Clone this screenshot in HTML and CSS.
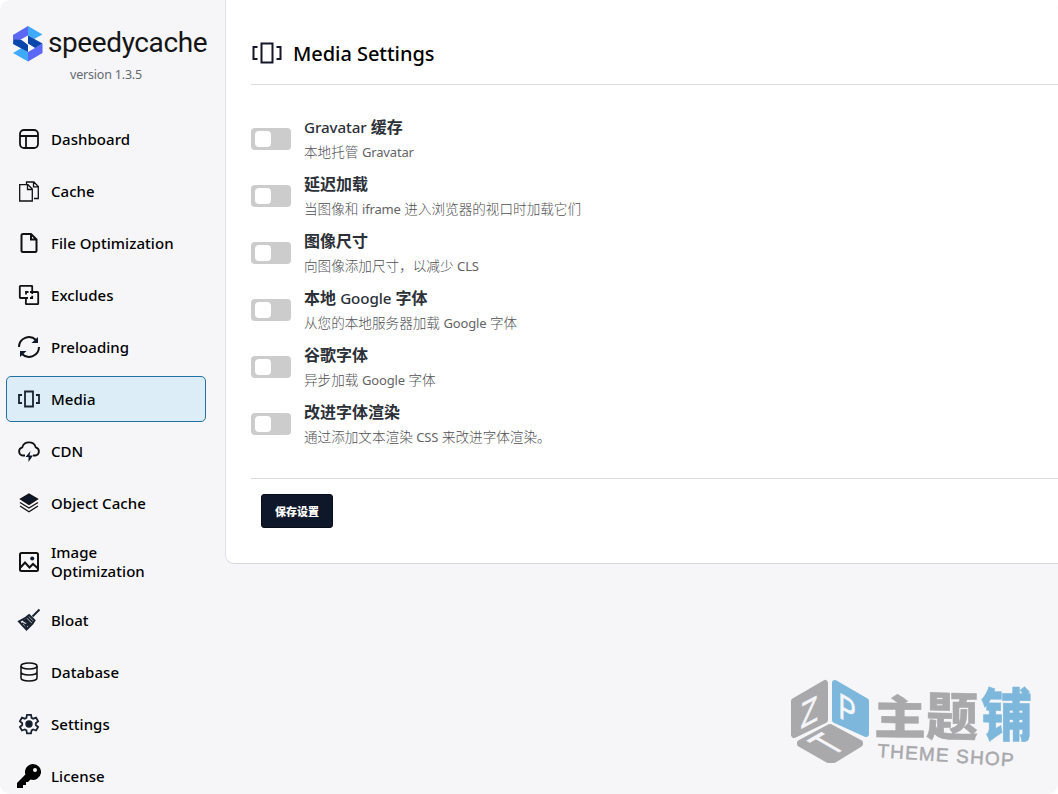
FILE: index.html
```html
<!DOCTYPE html>
<html lang="zh-CN">
<head>
  <meta charset="utf-8">
  <title>SpeedyCache - Media Settings</title>
  <link rel="stylesheet" href="styles.css">
</head>
<body>
  <div class="app">
    <!-- Sidebar with logo and tabs -->
    <div class="sidebar">
      <div class="brand">
        <svg class="brand-mark" width="30" height="36" viewBox="0 0 30 36">
          <path d="M0 9L15 0v9.500L1.500 17 0 18z" fill="#5a68f5"/>
          <path d="M15 0l14.500 8.500L21 13l-6-3.500z" fill="#3fa9fb"/>
          <path d="M0 27l8.500-5L15 26v9.500z" fill="#3fa9fb"/>
          <path d="M29.500 17.500V27L15 35.500V26z" fill="#5a68f5"/>
          <path d="M0 18l1-4.500 8 0.500 6 5v7zM15 9.500l14.500 8L22 22l-7-4.500z" fill="#0b46ad"/>
          <path d="M14.500 10v8L8.500 14zM15 18l6.500 4L15 25.500z" fill="#f6f7f9"/>
        </svg>
        <span class="brand-name">speedycache</span>
      </div>
      <div class="version">version 1.3.5</div>

      <div class="nav">
        <a class="nav-item">
          <svg class="icon" viewBox="0 0 24 24"><rect x="3" y="3" width="18" height="18" rx="4"/><path d="M3 9h18M9 9v12"/></svg>
          <span>Dashboard</span>
        </a>
        <a class="nav-item">
          <svg class="icon thin" viewBox="0 0 24 24"><path d="M2.700 5.700h8.300l4.300 4.300v12H2.700zM10.500 5.700v4.800h4.800M9.500 5V3h7.300l4.500 4.500V19.500h-4.300M16.500 3v4.800h4.800"/></svg>
          <span>Cache</span>
        </a>
        <a class="nav-item">
          <svg class="icon bold" viewBox="0 0 24 24"><path d="M6 3h8l5.500 5.500V19.500a1.500 1.500 0 0 1-1.500 1.500H6a1.500 1.500 0 0 1-1.500-1.500V4.500A1.500 1.500 0 0 1 6 3zM14 3v5.500h5.500"/></svg>
          <span>File Optimization</span>
        </a>
        <a class="nav-item">
          <svg class="icon" viewBox="0 0 24 24"><path d="M9 15H3.500a.7.7 0 0 1-.7-.7V3.500a.7.7 0 0 1 .7-.7h11a.7.7 0 0 1 .7.700V9h5.300a.7.7 0 0 1 .7.700v10.800a.7.7 0 0 1-.7.700h-11a.7.7 0 0 1-.7-.7zM9 11.500V9h2.500M13 9h2.200v2M15.200 12.800V15H13M11 15H9"/></svg>
          <span>Excludes</span>
        </a>
        <a class="nav-item">
          <svg class="icon bold" viewBox="0 0 24 24"><path d="M2 12A10 10 0 0 1 19 5M22 12A10 10 0 0 1 5 19"/><path class="solid" d="M21 2v6h-6.500zM3 22v-6h6.500z"/></svg>
          <span>Preloading</span>
        </a>
        <a class="nav-item active">
          <svg class="icon slate" viewBox="0 0 24 24"><path d="M8 4.500h8v15H8zM5 8H2v8h3M19 8h3v8h-3"/></svg>
          <span>Media</span>
        </a>
        <a class="nav-item">
          <svg class="icon" viewBox="0 0 24 24"><path d="M8 16.500H5.500a4.200 4.200 0 0 1-.2-8.200A7 6.800 0 0 1 18.700 8.300a4.200 4.200 0 0 1-.2 8.200H16"/><path class="solid" d="M13.500 12L8.500 18h3v5l4.500-6.500h-3.500z"/></svg>
          <span>CDN</span>
        </a>
        <a class="nav-item">
          <svg class="icon thin" viewBox="0 0 24 24"><path class="fill" d="M12 3l8.500 5L12 13.500 3.500 8z"/><path d="M3 11.500l9 5.500 9-5.500M3 15l9 5.800 9-5.800"/></svg>
          <span>Object Cache</span>
        </a>
        <a class="nav-item">
          <svg class="icon bold" viewBox="0 0 24 24"><rect x="3" y="3" width="18" height="18" rx="1.500"/><path d="M3.500 17.500l4.500-5 4.500 5 3.500-3.500 5 4.500"/><circle class="solid" cx="15.200" cy="8.500" r="2"/></svg>
          <span>Image<br>Optimization</span>
        </a>
        <a class="nav-item">
          <svg class="icon slate" viewBox="0 0 24 24"><path class="bold" d="M22.500 1.500L15.500 8.500"/><path class="bold" d="M12 7l5.500 5.500-2 3-6 6L2 13.500l7-4zM10 8.500l6 6"/><path d="M6 11.500l2 2.500M10 20l-2-3.500 3 .5 1.500 2M5 16l1.500-1"/><path class="fill" d="M9 11l5 5-1.500 1.500-5-5z"/></svg>
          <span>Bloat</span>
        </a>
        <a class="nav-item">
          <svg class="icon mid" viewBox="0 0 24 24"><ellipse cx="12" cy="6" rx="8" ry="3"/><path d="M4 6v12c0 1.700 3.600 3 8 3s8-1.300 8-3V6M4 12c0 1.700 3.600 3 8 3s8-1.300 8-3"/></svg>
          <span>Database</span>
        </a>
        <a class="nav-item">
          <svg class="icon slate" viewBox="0 0 24 24"><path d="M10 2.800h4l.6 3 1.600.9 2.900-1 2 3.500-2.300 2v1.800l2.300 2-2 3.500-2.900-1-1.600.9-.6 3h-4l-.6-3-1.600-.9-2.900 1-2-3.500 2.300-2v-1.800l-2.300-2 2-3.500 2.900 1 1.600-.9z"/><circle class="fill" cx="12" cy="12" r="2.800"/></svg>
          <span>Settings</span>
        </a>
        <a class="nav-item">
          <svg class="icon key" viewBox="0 0 24 24"><path fill-rule="evenodd" d="M16 0a8 8 0 0 0-7.600 10.500L0 19v5h6v-3h3v-3h2l2.500-2.400A8 8 0 1 0 16 0zM18 4a2 2 0 1 1 0 4 2 2 0 0 1 0-4z"/></svg>
          <span>License</span>
        </a>
      </div>
    </div>

    <!-- Media tab -->
    <div class="panel">
      <div class="panel-header">
        <svg class="header-icon" viewBox="0 0 32 24"><path d="M10.500 2.500h11v19h-11zM6.500 6h-4v12h4M25.500 6h4v12h-4"/></svg>
        <h1>Media Settings</h1>
      </div>

      <div class="options">
        <div class="option">
          <span class="toggle"></span>
          <div class="option-text">
            <div class="option-name"><span class="latin">Gravatar</span> 缓存</div>
            <div class="option-desc">本地托管 <span class="latin">Gravatar</span></div>
          </div>
        </div>
        <div class="option">
          <span class="toggle"></span>
          <div class="option-text">
            <div class="option-name">延迟加载</div>
            <div class="option-desc">当图像和 <span class="latin">iframe</span> 进入浏览器的视口时加载它们</div>
          </div>
        </div>
        <div class="option">
          <span class="toggle"></span>
          <div class="option-text">
            <div class="option-name">图像尺寸</div>
            <div class="option-desc">向图像添加尺寸，以减少 <span class="latin">CLS</span></div>
          </div>
        </div>
        <div class="option">
          <span class="toggle"></span>
          <div class="option-text">
            <div class="option-name">本地 <span class="latin">Google</span> 字体</div>
            <div class="option-desc">从您的本地服务器加载 <span class="latin">Google</span> 字体</div>
          </div>
        </div>
        <div class="option">
          <span class="toggle"></span>
          <div class="option-text">
            <div class="option-name">谷歌字体</div>
            <div class="option-desc">异步加载 <span class="latin">Google</span> 字体</div>
          </div>
        </div>
        <div class="option">
          <span class="toggle"></span>
          <div class="option-text">
            <div class="option-name">改进字体渲染</div>
            <div class="option-desc">通过添加文本渲染 <span class="latin">CSS</span> 来改进字体渲染。</div>
          </div>
        </div>
      </div>

      <div class="panel-footer">
        <button class="save-btn">保存设置</button>
      </div>
    </div>

    <!-- Watermark over the page corner -->
    <svg class="watermark" width="278" height="124" viewBox="0 0 278 124">
      <g class="wm-grey wm-face">
        <path d="M45 13v37L14 65V31z"/>
        <path d="M50 57l30 16v1L54 90h-6L20 74v-1z"/>
      </g>
      <path class="wm-blue wm-face" d="M55 13l31 18v33L55 50z"/>
      <text class="wm-letter" transform="matrix(.95 -.5 0 1.200 20.500 59)">Z</text>
      <text class="wm-letter" transform="matrix(.87 .5 0 1.200 58.500 47)">P</text>
      <text class="wm-letter" transform="matrix(.87 -.5 1.250 .72 52 86)">T</text>
      <text class="wm-grey wm-cjk" transform="matrix(1.040 .01 0 .93 94 64)" font-size="50">主</text>
      <text class="wm-grey wm-cjk" transform="matrix(1 .02 0 1 146 65)" font-size="52">题</text>
      <text class="wm-blue wm-cjk" transform="matrix(.95 .01 0 1.070 201 66)" font-size="54">铺</text>
      <text class="wm-grey wm-latin" transform="translate(97 87) rotate(4)">THEME SHOP</text>
    </svg>
  </div>
</body>
</html>
```
FILE: styles.css
```css
* {
  box-sizing: border-box;
}
body {
  margin: 0;
  background: #fff;
  font-family: "Noto Sans", "Noto Sans CJK SC", sans-serif;
  color: #000;
}
.app {
  position: relative;
  display: flex;
  align-items: flex-start;
  height: 794px;
  overflow: hidden;
  border-radius: 10px;
  background: #f6f6f9;
}

/* Sidebar */
.sidebar {
  width: 225px;
  flex-shrink: 0;
  padding: 26px 19px 0 6px;
}
.brand {
  display: flex;
  align-items: center;
  height: 36px;
  padding-left: 7px;
  gap: 5px;
}
.brand-mark {
  flex-shrink: 0;
}
.brand-name {
  margin-top: -3px;
  font-family: Roboto, sans-serif;
  font-size: 28px;
  line-height: 34px;
  letter-spacing: -.4px;
  color: #151515;
}
.version {
  margin-top: 4px;
  text-align: center;
  font-size: 12.500px;
  letter-spacing: -.2px;
  line-height: 18px;
  color: #646970;
}
.nav {
  display: flex;
  flex-direction: column;
  gap: 6px;
  margin-top: 32px;
}
.nav-item {
  display: flex;
  align-items: center;
  gap: 10px;
  min-height: 46px;
  padding: 10px;
  border: 1px solid transparent;
  border-radius: 5px;
  font-size: 15px;
  font-weight: 500;
  letter-spacing: .05px;
  line-height: 18.500px;
}
.nav-item.active {
  background: #dcedf7;
  border-color: #2271a0;
}
.icon {
  width: 24px;
  height: 24px;
  flex-shrink: 0;
  fill: none;
  stroke: #111;
  stroke-width: 1.800;
}
.icon.thin {
  stroke-width: 1.300;
}
.icon.mid {
  stroke-width: 1.500;
}
.icon.bold,
.icon .bold {
  stroke-width: 2;
}
.icon.slate {
  stroke: #1a2230;
}
.icon .solid,
.icon .fill {
  fill: #0f172a;
}
.icon .solid {
  stroke: none;
}
.icon.key {
  fill: #000;
  stroke: none;
}

/* Settings panel */
.panel {
  flex: 1;
  height: 564px;
  padding: 22px 0 0 25px;
  background: #fff;
  border-left: 1px solid #e1e1e5;
  border-bottom: 1px solid #d8d8dc;
  border-bottom-left-radius: 9px;
}
.panel-header {
  display: flex;
  align-items: center;
  gap: 10px;
  height: 63px;
  border-bottom: 1px solid #dcdcde;
}
.header-icon {
  width: 32px;
  height: 24px;
  fill: none;
  stroke: #16162a;
  stroke-width: 2;
}
h1 {
  margin: 0;
  font-size: 20px;
  font-weight: 500;
  letter-spacing: -.05px;
}
.options {
  padding-top: 30px;
}
.option {
  display: flex;
  align-items: center;
  gap: 13px;
  height: 47px;
  margin-bottom: 10px;
}
.toggle {
  width: 40px;
  height: 22px;
  padding: 3px 4px;
  border-radius: 4px;
  background: #ccc;
}
.toggle::before {
  content: "";
  display: block;
  width: 16px;
  height: 16px;
  border-radius: 4px;
  background: #fff;
}
.option-name {
  font-size: 16px;
  font-weight: 600;
  line-height: 24px;
  color: #2c3038;
}
.option-name .latin {
  font-size: 15.200px;
  font-weight: 500;
  letter-spacing: -.1px;
}
.option-desc {
  margin-top: 2px;
  font-size: 13.600px;
  font-weight: 300;
  line-height: 21px;
  color: #505054;
}
.option-desc .latin {
  font-size: 13px;
  font-weight: 400;
  letter-spacing: -.15px;
  color: #646468;
}
.panel-footer {
  margin-top: 31px;
  padding: 15px 10px;
  border-top: 1px solid #dcdcde;
}
.save-btn {
  display: block;
  width: 72px;
  height: 34px;
  padding: 0;
  border: 1px solid #080d18;
  border-radius: 3px;
  background: #0f172a;
  color: #fff;
  font-family: "Noto Sans CJK SC", sans-serif;
  font-size: 11px;
  font-weight: 900;
}

/* Watermark */
.watermark {
  position: absolute;
  right: 0;
  bottom: 0;
}
.wm-grey {
  fill: #a9a9ac;
  stroke: #a9a9ac;
}
.wm-blue {
  fill: #7db8dc;
  stroke: #7db8dc;
}
.wm-face {
  stroke-width: 6;
  stroke-linejoin: round;
}
.wm-letter {
  font: 30px "Liberation Sans", sans-serif;
  fill: #f6f6f9;
  stroke: #f6f6f9;
  stroke-width: .5;
}
.wm-cjk {
  font-family: "Noto Sans CJK SC", sans-serif;
  font-weight: 900;
  stroke-width: .5;
}
.wm-latin {
  font: 19px "Liberation Sans", sans-serif;
  letter-spacing: 1.200px;
  stroke-width: .5;
}
```
